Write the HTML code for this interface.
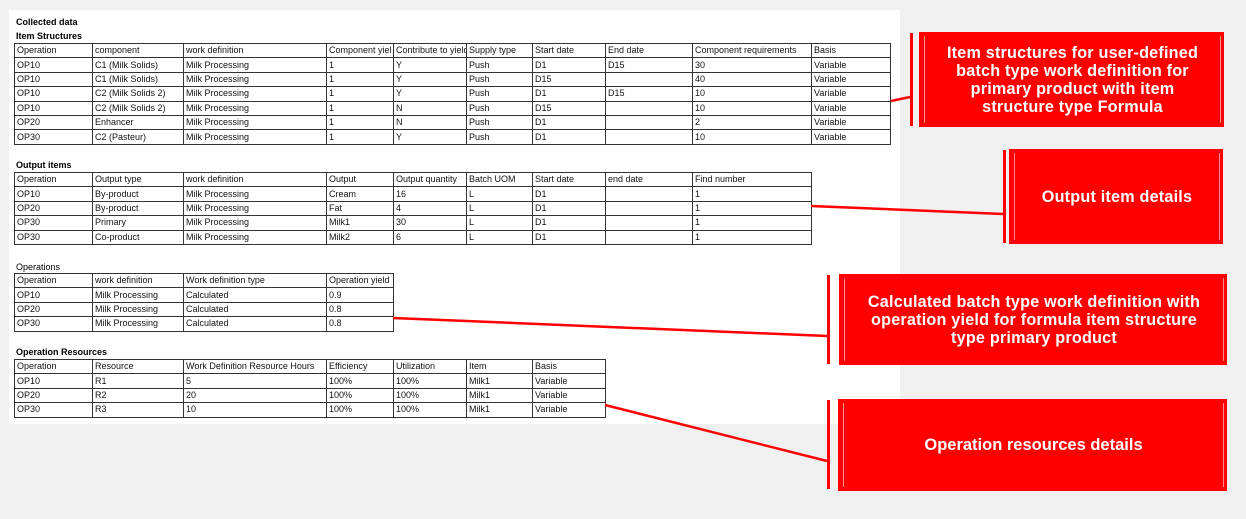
<!DOCTYPE html>
<html><head><meta charset="utf-8"><style>
body{margin:0;width:1246px;height:519px;background:#f0f0f0;position:relative;overflow:hidden;font-family:"Liberation Sans",sans-serif}
.panel{position:absolute;left:9px;top:10px;width:891px;height:414px;background:#fff}
.lbl{position:absolute;left:16px;font-size:9px;color:#000}
.b{font-weight:bold}
table{position:absolute;left:14px;border-collapse:collapse;table-layout:fixed;font-size:9px;color:#111}
td{border:1px solid #333;height:13.4px;padding:0 0 0 2px;white-space:nowrap;overflow:hidden;line-height:13px}
.bar{position:absolute;width:3px;background:#f00}
.box{position:absolute;background:#f00;color:#fff;font-weight:bold;font-size:16.2px;letter-spacing:0.2px;line-height:18px;display:flex;align-items:center;justify-content:center;text-align:center;box-sizing:border-box;border-left:2px solid #f00}
.box:before,.box:after{content:"";position:absolute;top:4px;bottom:4px;width:1px;background:#f88}
.box:before{left:3px}.box:after{right:3px}
svg{position:absolute;left:0;top:0}
</style></head><body>
<div class="panel"></div>
<div class="lbl b" style="top:17px">Collected data</div>
<div class="lbl b" style="top:31px">Item Structures</div>
<table style="top:43px;width:877px">
<colgroup><col style="width:78px"><col style="width:91px"><col style="width:143px"><col style="width:67px"><col style="width:73px"><col style="width:66px"><col style="width:73px"><col style="width:87px"><col style="width:119px"><col style="width:79px"></colgroup>
<tr><td>Operation</td><td>component</td><td>work definition</td><td>Component yiel</td><td>Contribute to yield</td><td>Supply type</td><td>Start date</td><td>End date</td><td>Component requirements</td><td>Basis</td></tr>
<tr><td>OP10</td><td>C1 (Milk Solids)</td><td>Milk Processing</td><td>1</td><td>Y</td><td>Push</td><td>D1</td><td>D15</td><td>30</td><td>Variable</td></tr>
<tr><td>OP10</td><td>C1 (Milk Solids)</td><td>Milk Processing</td><td>1</td><td>Y</td><td>Push</td><td>D15</td><td></td><td>40</td><td>Variable</td></tr>
<tr><td>OP10</td><td>C2 (Milk Solids 2)</td><td>Milk Processing</td><td>1</td><td>Y</td><td>Push</td><td>D1</td><td>D15</td><td>10</td><td>Variable</td></tr>
<tr><td>OP10</td><td>C2 (Milk Solids 2)</td><td>Milk Processing</td><td>1</td><td>N</td><td>Push</td><td>D15</td><td></td><td>10</td><td>Variable</td></tr>
<tr><td>OP20</td><td>Enhancer</td><td>Milk Processing</td><td>1</td><td>N</td><td>Push</td><td>D1</td><td></td><td>2</td><td>Variable</td></tr>
<tr><td>OP30</td><td>C2 (Pasteur)</td><td>Milk Processing</td><td>1</td><td>Y</td><td>Push</td><td>D1</td><td></td><td>10</td><td>Variable</td></tr>
</table>
<div class="lbl b" style="top:160px">Output items</div>
<table style="top:172px;width:798px">
<colgroup><col style="width:78px"><col style="width:91px"><col style="width:143px"><col style="width:67px"><col style="width:73px"><col style="width:66px"><col style="width:73px"><col style="width:87px"><col style="width:119px"></colgroup>
<tr><td>Operation</td><td>Output type</td><td>work definition</td><td>Output</td><td>Output quantity</td><td>Batch UOM</td><td>Start date</td><td>end date</td><td>Find number</td></tr>
<tr><td>OP10</td><td>By-product</td><td>Milk Processing</td><td>Cream</td><td>16</td><td>L</td><td>D1</td><td></td><td>1</td></tr>
<tr><td>OP20</td><td>By-product</td><td>Milk Processing</td><td>Fat</td><td>4</td><td>L</td><td>D1</td><td></td><td>1</td></tr>
<tr><td>OP30</td><td>Primary</td><td>Milk Processing</td><td>Milk1</td><td>30</td><td>L</td><td>D1</td><td></td><td>1</td></tr>
<tr><td>OP30</td><td>Co-product</td><td>Milk Processing</td><td>Milk2</td><td>6</td><td>L</td><td>D1</td><td></td><td>1</td></tr>
</table>
<div class="lbl" style="top:262px">Operations</div>
<table style="top:273px;width:380px">
<colgroup><col style="width:78px"><col style="width:91px"><col style="width:143px"><col style="width:67px"></colgroup>
<tr><td>Operation</td><td>work definition</td><td>Work definition type</td><td>Operation yield</td></tr>
<tr><td>OP10</td><td>Milk Processing</td><td>Calculated</td><td>0.9</td></tr>
<tr><td>OP20</td><td>Milk Processing</td><td>Calculated</td><td>0.8</td></tr>
<tr><td>OP30</td><td>Milk Processing</td><td>Calculated</td><td>0.8</td></tr>
</table>
<div class="lbl b" style="top:347px">Operation Resources</div>
<table style="top:359px;width:592px">
<colgroup><col style="width:78px"><col style="width:91px"><col style="width:143px"><col style="width:67px"><col style="width:73px"><col style="width:66px"><col style="width:73px"></colgroup>
<tr><td>Operation</td><td>Resource</td><td>Work Definition Resource Hours</td><td>Efficiency</td><td>Utilization</td><td>Item</td><td>Basis</td></tr>
<tr><td>OP10</td><td>R1</td><td>5</td><td>100%</td><td>100%</td><td>Milk1</td><td>Variable</td></tr>
<tr><td>OP20</td><td>R2</td><td>20</td><td>100%</td><td>100%</td><td>Milk1</td><td>Variable</td></tr>
<tr><td>OP30</td><td>R3</td><td>10</td><td>100%</td><td>100%</td><td>Milk1</td><td>Variable</td></tr>
</table>
<svg width="1246" height="519">
<g stroke="#f00" stroke-width="2.5" fill="none">
<line x1="891" y1="101" x2="910" y2="97"/>
<line x1="811" y1="206" x2="1003" y2="214"/>
<line x1="393" y1="318" x2="827" y2="336"/>
<line x1="605" y1="405" x2="827" y2="461"/>
</g></svg>
<div class="bar" style="left:910px;top:33px;height:93px"></div>
<div class="box" style="left:919px;top:32px;width:305px;height:95px">Item structures for user-defined<br>batch type work definition for<br>primary product with item<br>structure type Formula</div>
<div class="bar" style="left:1003px;top:150px;height:93px"></div>
<div class="box" style="left:1009px;top:149px;width:214px;height:95px">Output item details</div>
<div class="bar" style="left:827px;top:275px;height:89px"></div>
<div class="box" style="left:839px;top:274px;width:388px;height:91px">Calculated batch type work definition with<br>operation yield for formula item structure<br>type primary product</div>
<div class="bar" style="left:827px;top:400px;height:89px"></div>
<div class="box" style="left:838px;top:399px;width:389px;height:92px;letter-spacing:0;font-size:16.5px">Operation resources details</div>
</body></html>
